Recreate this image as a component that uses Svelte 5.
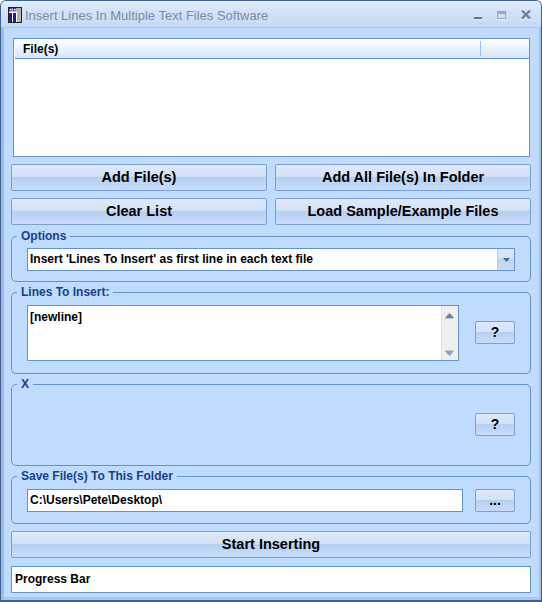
<script>
  let lines = "[newline]";
  let folder = "C:\\Users\\Pete\\Desktop\\";
</script>

<div class="window">
  <header class="titlebar">
    <svg class="app-icon" width="16" height="18" viewBox="0 0 16 18">
      <rect x="1.5" y="1.5" width="13" height="15" fill="#fff" stroke="#222" />
      <rect x="10" y="2" width="4" height="14" fill="#b9b2a4" />
      <rect x="2.5" y="2.5" width="2.5" height="2.5" fill="#fff" stroke="#1c1c9c" stroke-width="0.8" />
      <rect x="6.5" y="2.5" width="2.5" height="2.5" fill="#fff" stroke="#1c1c9c" stroke-width="0.8" />
      <rect x="2" y="7" width="3" height="9" fill="#1c1c9c" />
      <rect x="6" y="7" width="3" height="9" fill="#1c1c9c" />
    </svg>
    <span class="title">Insert Lines In Multiple Text Files Software</span>
    <div class="controls">
      <svg width="8" height="4" viewBox="0 0 8 4"><rect width="8" height="2" y="0" fill="#5f7594" /><rect width="8" height="1" y="2" fill="#e8f0fb" /></svg>
      <svg width="9" height="9" viewBox="0 0 9 9"><rect x="0.5" y="0.5" width="8" height="7" fill="#d5e1f2" stroke="#98a7bc" /><rect x="1" y="1" width="7" height="2" fill="#98a7bc" /><rect y="8" width="9" height="1" fill="#e8f0fb" /></svg>
      <svg width="10" height="10" viewBox="0 0 10 10"><path d="M1 0.5 L9 8.5 M9 0.5 L1 8.5" stroke="#6a7f9c" stroke-width="2.2" fill="none" /><path d="M0 9.5 H2 M8 9.5 H10" stroke="#e8f0fb" /></svg>
    </div>
  </header>

  <main class="client">
    <div class="listview">
      <div class="list-head">
        <span class="col-file">File(s)</span>
        <span class="col-rest"></span>
      </div>
    </div>

    <div class="btn-grid">
      <button type="button" class="btn big">Add File(s)</button>
      <button type="button" class="btn big">Add All File(s) In Folder</button>
      <button type="button" class="btn big">Clear List</button>
      <button type="button" class="btn big">Load Sample/Example Files</button>
    </div>

    <fieldset class="group options">
      <legend>Options</legend>
      <div class="combo">
        <span class="combo-text">Insert 'Lines To Insert' as first line in each text file</span>
        <span class="combo-arrow">
          <svg width="7" height="4" viewBox="0 0 7 4"><path d="M0 0 H7 L3.5 4 Z" fill="#4e6a8f" /></svg>
        </span>
      </div>
    </fieldset>

    <fieldset class="group lines">
      <legend>Lines To Insert:</legend>
      <div class="memo">
        <div class="memo-text">{lines}</div>
        <div class="scrollbar">
          <svg width="9" height="6" viewBox="0 0 9 6"><path d="M0 5 L4.5 0 L9 5 Z" fill="#6d7fa3" /><rect y="5" width="9" height="1" fill="#c4cede" /></svg>
          <svg width="9" height="6" viewBox="0 0 9 6"><rect width="9" height="1" fill="#c4cede" /><path d="M0 1 L9 1 L4.5 6 Z" fill="#8b9dc0" /></svg>
        </div>
      </div>
      <button type="button" class="btn small">?</button>
    </fieldset>

    <fieldset class="group x">
      <legend>X</legend>
      <button type="button" class="btn small">?</button>
    </fieldset>

    <fieldset class="group save">
      <legend>Save File(s) To This Folder</legend>
      <div class="path">{folder}</div>
      <button type="button" class="btn small dots">...</button>
    </fieldset>

    <button type="button" class="btn big start">Start Inserting</button>
    <div class="progress">Progress Bar</div>
  </main>
</div>

<style>
  :global(body) {
    margin: 0;
    background: #fff;
  }

  .window {
    width: 542px;
    height: 602px;
    box-sizing: border-box;
    display: flex;
    flex-direction: column;
    background: #bfdbff;
    border: 1px solid #3f618f;
    border-bottom-width: 2px;
    border-radius: 6px 6px 0 0;
    font-family: "Liberation Sans", Arial, sans-serif;
    overflow: hidden;
  }

  .titlebar {
    height: 27px;
    flex: none;
    display: flex;
    align-items: center;
    padding: 2px 7px 0 6px;
    box-sizing: border-box;
    background: linear-gradient(#e3edfb 0%, #d3e2f8 40%, #c5d9f5 100%);
    border-bottom: 1px solid #a9c8f0;
  }

  .app-icon {
    margin-right: 2px;
    margin-top: -1px;
  }

  .title {
    font-size: 13px;
    color: #7c8ba1;
  }

  .controls {
    margin-left: auto;
    display: flex;
    align-items: center;
    gap: 15px;
    padding-right: 3px;
  }

  .controls svg:first-child {
    margin-top: 7px;
  }

  .client {
    flex: 1;
    display: flex;
    flex-direction: column;
    padding: 10px 8px 0 7px;
    border-left: 3px solid #9dbde8;
    border-right: 2px solid #a9bedb;
    border-bottom: 3px solid #a8c6ee;
  }

  .client > * {
    flex: none;
  }

  .listview {
    height: 119px;
    margin: 0 1px 0 2px;
    box-sizing: border-box;
    background: #fff;
    border: 1px solid #6592cb;
  }

  .list-head {
    height: 19px;
    display: flex;
    background: linear-gradient(#ffffff, #d6e6fc);
    border-bottom: 1px solid #6592cb;
    font-size: 12px;
    font-weight: bold;
    color: #000;
    margin-left: 1px;
  }

  .col-file {
    width: 457px;
    padding-left: 8px;
    border-right: 1px solid #97c1f5;
    margin: 2px 0;
    line-height: 17px;
  }

  .btn-grid {
    margin-top: 7px;
    display: grid;
    grid-template-columns: 256px 256px;
    grid-auto-rows: 27px;
    column-gap: 8px;
    row-gap: 7px;
  }

  .btn {
    margin: 0;
    padding: 0 0 2px;
    box-sizing: border-box;
    border: 1px solid #7d9fcf;
    border-radius: 2px;
    font-family: inherit;
    font-weight: bold;
    color: #000;
    background: linear-gradient(#dfe9f9 0%, #d3e2f6 45%, #b6d0f2 50%, #c8dcf9 100%);
    cursor: pointer;
  }

  .big {
    font-size: 14.5px;
  }

  .small {
    width: 40px;
    height: 23px;
    font-size: 14px;
    flex: none;
  }

  .group {
    margin: 0;
    padding: 0 15px;
    min-width: 0;
    box-sizing: border-box;
    border: 1px solid #6592cb;
    border-radius: 5px;
    display: flex;
    align-items: flex-start;
  }

  .group legend {
    padding: 0 4px;
    margin-left: -10px;
    font-size: 12px;
    font-weight: bold;
    color: #15428b;
    line-height: 14px;
  }

  .options {
    margin-top: 4px;
    height: 53px;
  }

  .combo {
    width: 488px;
    height: 23px;
    margin-top: 5px;
    box-sizing: border-box;
    display: flex;
    background: #fff;
    border: 1px solid #6592cb;
    font-size: 12px;
    font-weight: bold;
  }

  .combo-text {
    flex: 1;
    padding-left: 2px;
    line-height: 21px;
  }

  .combo-arrow {
    width: 16px;
    display: flex;
    align-items: center;
    justify-content: center;
    background: linear-gradient(#dbe7f8 0%, #d3e2f6 45%, #bcd4f4 50%, #c8dcf8 100%);
    border-left: 1px solid #b4cbe8;
  }

  .lines {
    margin-top: 3px;
    height: 89px;
  }

  .memo {
    width: 432px;
    height: 56px;
    margin-top: 6px;
    box-sizing: border-box;
    display: flex;
    background: #fff;
    border: 1px solid #6592cb;
    font-size: 12px;
    font-weight: bold;
  }

  .memo-text {
    flex: 1;
    padding: 4px 2px;
  }

  .scrollbar {
    width: 17px;
    display: flex;
    flex-direction: column;
    justify-content: space-between;
    align-items: center;
    padding: 7px 1px 4px 0;
    box-sizing: border-box;
    background: #efefef;
    border-left: 1px solid #e0e0e0;
  }

  .lines .small {
    margin-left: 16px;
    margin-top: 22px;
  }

  .x {
    margin-top: 3px;
    height: 89px;
    justify-content: flex-end;
  }

  .x .small {
    margin-top: 22px;
  }

  .save {
    margin-top: 3px;
    height: 55px;
  }

  .path {
    width: 436px;
    height: 23px;
    margin-top: 6px;
    box-sizing: border-box;
    padding-left: 2px;
    background: #fff;
    border: 1px solid #6592cb;
    font-size: 12px;
    font-weight: bold;
    line-height: 21px;
  }

  .save .small {
    margin-left: 12px;
    margin-top: 6px;
  }

  .start {
    margin-top: 7px;
    height: 27px;
  }

  .progress {
    margin-top: 8px;
    height: 27px;
    box-sizing: border-box;
    padding-left: 3px;
    background: #fff;
    border: 1px solid #6592cb;
    font-size: 12px;
    font-weight: bold;
    line-height: 25px;
  }
</style>
